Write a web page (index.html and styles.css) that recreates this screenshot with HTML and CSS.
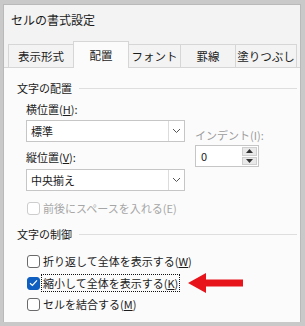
FILE: index.html
```html
<!DOCTYPE html>
<html lang="ja">
<head>
  <meta charset="UTF-8" />
  <title>セルの書式設定</title>
  <link rel="stylesheet" href="styles.css">
</head>
<body>
  <div class="dialog">
    <div class="title">セルの書式設定</div>
    <div class="tabs">
      <div class="tab t1">表示形式</div>
      <div class="tab t2 active">配置</div>
      <div class="tab t3">フォント</div>
      <div class="tab t4">罫線</div>
      <div class="tab t5">塗りつぶし</div>
    </div>
    <div class="panel">
      <div class="group-head">文字の配置</div>
      <div class="fields">
        <div class="col-left">
          <div class="label">横位置(<u>H</u>):</div>
          <div class="select first">
            <span class="select-value">標準</span>
            <span class="select-btn"><svg width="9" height="6" viewBox="0 0 9 6"><polyline points="1,1 4.5,4.5 8,1" fill="none" stroke="#555" stroke-width="1"/></svg></span>
          </div>
          <div class="label second">縦位置(<u>V</u>):</div>
          <div class="select third">
            <span class="select-value">中央揃え</span>
            <span class="select-btn"><svg width="9" height="6" viewBox="0 0 9 6"><polyline points="1,1 4.5,4.5 8,1" fill="none" stroke="#555" stroke-width="1"/></svg></span>
          </div>
        </div>
        <div class="col-right">
          <div class="label muted">インデント(I):</div>
          <div class="spin">
            <span class="spin-value">0</span>
            <span class="spin-btns">
              <span class="spin-btn"><svg width="7" height="4" viewBox="0 0 7 4"><polygon points="0,4 3.5,0 7,4" fill="#333"/></svg></span>
              <span class="spin-btn"><svg width="7" height="4" viewBox="0 0 7 4"><polygon points="0,0 3.5,4 7,0" fill="#333"/></svg></span>
            </span>
          </div>
        </div>
      </div>
      <div class="check-row disabled">
        <span class="box"></span>
        <span class="check-label">前後にスペースを入れる(E)</span>
      </div>

      <div class="group-head second-group">文字の制御</div>
      <div class="check-row wrap">
        <span class="box"></span>
        <span class="check-label">折り返して全体を表示する(<u>W</u>)</span>
      </div>
      <div class="check-row shrink">
        <span class="box checked"><svg width="9" height="8" viewBox="0 0 9 8"><polyline points="1,4.2 3.4,6.4 8,1.4" fill="none" stroke="#fff" stroke-width="1.2"/></svg></span>
        <span class="check-label focus">縮小して全体を表示する(<u>K</u>)</span>
        <svg class="arrow" width="56" height="20" viewBox="0 0 56 20"><polygon points="0,10 18,0 18,6.5 55,6.5 55,13.5 18,13.5 18,20" fill="#e8141c"/></svg>
      </div>
      <div class="check-row merge">
        <span class="box"></span>
        <span class="check-label">セルを結合する(<u>M</u>)</span>
      </div>
    </div>
  </div>
</body>
</html>
```

FILE: styles.css
```css
body {
  margin: 0;
  width: 305px;
  height: 326px;
  overflow: hidden;
  background: #c9c9c9;
  font-family: "Noto Sans CJK JP", "Noto Sans", sans-serif;
  font-size: 11px;
  color: #1b1b1b;
}
u {
  text-decoration-thickness: 1px;
  text-underline-offset: 1px;
}
.dialog {
  width: 298px;
  height: 318px;
  margin: 4px 0 0 3px;
  box-sizing: border-box;
  background: #f3f3f3;
  border: 1px solid #b9b9b9;
  border-bottom: none;
  display: flex;
  flex-direction: column;
}
.title {
  height: 29px;
  line-height: 29px;
  padding-left: 7px;
  font-size: 12px;
}
.tabs {
  display: flex;
  align-items: flex-end;
  padding: 7px 0 0 4px;
}
.tab {
  height: 23px;
  box-sizing: border-box;
  border: 1px solid #d6d6d6;
  border-bottom: none;
  margin-left: -1px;
  display: flex;
  justify-content: center;
  align-items: center;
  font-size: 11.5px;
}
.tab:first-child { margin-left: 0; }
.t1 { width: 66px; }
.t2 { width: 56px; }
.t3 { width: 53px; }
.t4 { width: 56px; }
.t5 { width: 62px; }
.tab.active {
  height: 27px;
  margin-bottom: -1px;
  background: #fbfbfb;
  position: relative;
  z-index: 1;
}
.panel {
  flex: 1;
  background: #fbfbfb;
  border-top: 1px solid #d6d6d6;
  padding: 12px 3px 0 13px;
}
.group-head {
  display: flex;
  align-items: center;
  height: 16px;
  line-height: 16px;
}
.group-head::after {
  content: "";
  flex: 1;
  height: 1px;
  background: #dedede;
  margin-left: 7px;
}
.second-group { margin-top: 9px; }
.fields {
  display: grid;
  grid-template-columns: 159px 64px;
  column-gap: 10px;
  margin: 5px 0 0 9px;
}
.label {
  height: 16px;
  line-height: 16px;
  white-space: nowrap;
}
.label.second { margin-top: 7px; }
.muted { color: #9c9c9c; }
.select {
  height: 22px;
  box-sizing: border-box;
  border: 1px solid #c6c6c6;
  background: #fff;
  display: flex;
  align-items: stretch;
}
.select.first { margin-top: 3px; }
.select.third { margin-top: 4px; }
.select-value {
  flex: 1;
  padding-left: 4px;
  display: flex;
  align-items: center;
}
.select-btn {
  width: 15px;
  border-left: 1px solid #dcdcdc;
  display: flex;
  justify-content: center;
  align-items: center;
}
.col-right { padding-top: 26px; }
.spin {
  margin-top: 2px;
  height: 22px;
  box-sizing: border-box;
  border: 1px solid #c6c6c6;
  background: #fff;
  display: flex;
}
.spin-value {
  flex: 1;
  padding-left: 5px;
  display: flex;
  align-items: center;
}
.spin-btns {
  width: 15px;
  display: flex;
  flex-direction: column;
  padding: 1px 1px 1px 0;
  gap: 1px;
}
.spin-btn {
  flex: 1;
  background: #e9e9e9;
  border: 1px solid #cfcfcf;
  display: flex;
  justify-content: center;
  align-items: center;
}
.check-row {
  display: flex;
  align-items: center;
  margin-left: 10px;
  height: 18px;
  white-space: nowrap;
}
.check-row.disabled { margin-top: 8px; color: #a6a6a6; }
.check-row.wrap { margin-top: 10px; }
.check-row.shrink { margin-top: 4px; }
.check-row.merge { margin-top: 3px; }
.box {
  width: 13px;
  height: 13px;
  box-sizing: border-box;
  border: 1px solid #6a6a6a;
  border-radius: 3px;
  background: #fff;
  margin-right: 1px;
  display: flex;
  justify-content: center;
  align-items: center;
}
.disabled .box { border-color: #cdcdcd; }
.box.checked {
  background: #0f5fc0;
  border-color: #0f5fc0;
}
.check-label {
  border: 1px dotted transparent;
  padding: 0 1px;
  height: 18px;
  line-height: 16px;
  box-sizing: border-box;
}
.check-label.focus { border-color: #111; }
.arrow { margin-left: 8px; }
```
